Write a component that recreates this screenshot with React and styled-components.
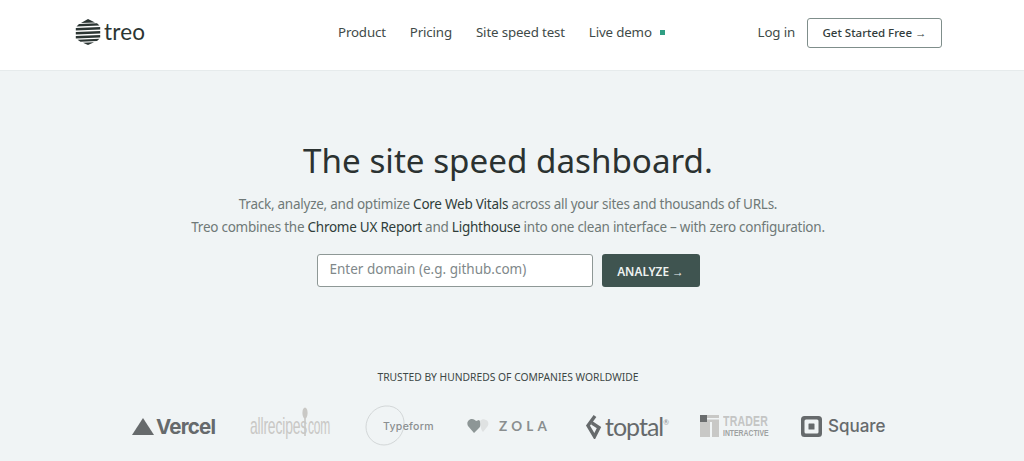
import styled, { createGlobalStyle } from 'styled-components';

const GlobalStyle = createGlobalStyle`
  html, body {
    margin: 0;
    padding: 0;
    height: 461px;
    overflow: hidden;
    background: #f0f4f5;
    font-family: "Noto Sans", "Open Sans", sans-serif;
  }
  * { box-sizing: border-box; }
`;

// 상단 헤더
const Header = styled.header`
  height: 71px;
  background: #fff;
  border-bottom: 1px solid #e6ebec;
  display: flex;
  align-items: center;
  padding: 0 82px 7px 75px;
`;

const Logo = styled.a`
  display: flex;
  align-items: center;
  gap: 3px;
  width: 263px;
  color: #2b3533;
  font-family: "Lato", sans-serif;
  font-size: 22.5px;
  line-height: 28px;
  letter-spacing: 0.2px;
`;

const Nav = styled.nav`
  display: flex;
  align-items: center;
  gap: 24px;
  flex: 1;
`;

const NavLink = styled.a`
  font-size: 13.3px;
  color: #3f4b49;
  letter-spacing: -0.15px;
`;

const LiveDot = styled.span`
  display: inline-block;
  width: 5px;
  height: 5px;
  margin-left: 8px;
  vertical-align: 2px;
  background: #2f9e83;
`;

const Right = styled.div`
  display: flex;
  align-items: center;
  gap: 12px;
`;

const StartButton = styled.a`
  width: 135px;
  height: 30px;
  margin-top: 2px;
  display: flex;
  align-items: center;
  justify-content: center;
  border: 1px solid #7f8e8b;
  border-radius: 3px;
  background: #fff;
  color: #333d3b;
  font-size: 11.5px;
  font-weight: 500;
`;

// 히어로 영역
const Hero = styled.section`
  width: 1016px;
  display: flex;
  flex-direction: column;
  align-items: center;
  padding-top: 67px;
`;

const Title = styled.h1`
  margin: 0;
  font-size: 33.2px;
  line-height: 46px;
  font-weight: 400;
  color: #2b3231;
`;

const Lead = styled.p`
  margin: 9px 0 0;
  text-align: center;
  font-size: 13.5px;
  line-height: 23px;
  color: #6f7977;
  letter-spacing: -0.25px;
`;

const Strong = styled.span`
  color: #2f3d3a;
`;

const SearchRow = styled.form`
  display: flex;
  gap: 9px;
  margin-top: 15px;
`;

const DomainInput = styled.div`
  width: 276px;
  height: 33px;
  padding: 0 12px 3px;
  display: flex;
  align-items: center;
  background: #fff;
  border: 1px solid #8e9896;
  border-radius: 3px;
  font-size: 13.5px;
  color: #80888a;
`;

const AnalyzeButton = styled.div`
  width: 98px;
  height: 33px;
  display: flex;
  align-items: center;
  justify-content: center;
  background: #3f5450;
  border-radius: 3px;
  color: #eef2f1;
  font-size: 11.8px;
  font-weight: 600;
`;

// 고객사 로고
const Trusted = styled.div`
  margin-top: 83px;
  font-size: 10.3px;
  line-height: 14px;
  color: #3d4745;
`;

const LogoRow = styled.div`
  width: 1016px;
  height: 46px;
  margin-top: 19px;
  padding: 0 0 0 132px;
  display: grid;
  grid-template-columns: 118px 115px 102px 118px 115px 101px auto;
  align-items: center;
`;

const Brand = styled.div`
  display: flex;
  align-items: center;
  gap: ${(p) => p.$gap || 0}px;
  height: 46px;
  position: relative;
`;

const VercelText = styled.span`
  font-family: "Inter", sans-serif;
  font-weight: 700;
  font-size: 20.5px;
  letter-spacing: -0.8px;
  color: #666a6c;
`;

const RecipesText = styled.span`
  font-family: "Liberation Sans", sans-serif;
  font-size: 24px;
  color: #c9c8c5;
  transform: scaleX(${(p) => p.$scale});
  transform-origin: left center;
  white-space: nowrap;
  letter-spacing: -0.3px;
  width: ${(p) => p.$width}px;
`;

const Spoon = styled.svg`
  margin-top: -8px;
  flex: none;
`;

const TypeformText = styled.span`
  font-family: "Inter", sans-serif;
  font-size: 10.5px;
  font-weight: 500;
  color: #8b8f90;
  position: absolute;
  left: 18px;
  letter-spacing: 0.3px;
`;

const ZolaText = styled.span`
  font-family: "Lato", sans-serif;
  font-size: 13.5px;
  font-weight: 700;
  letter-spacing: 4.2px;
  color: #8a8e8f;
`;

const ToptalText = styled.span`
  font-family: "Lato", sans-serif;
  font-size: 25px;
  color: #666a6c;
  letter-spacing: -1px;
`;

const Registered = styled.sup`
  font-size: 7px;
  line-height: 0;
  letter-spacing: 0;
  vertical-align: 11px;
  color: #8a8e8f;
`;

const TraderStack = styled.div`
  display: flex;
  flex-direction: column;
  margin-top: 1px;
  line-height: 11px;
  font-family: "Liberation Sans", sans-serif;
`;

const TraderTop = styled.span`
  font-size: 14px;
  font-weight: 700;
  color: #c4c5c4;
  transform: scaleX(0.75);
  transform-origin: left center;
  letter-spacing: 0.3px;
`;

const TraderBottom = styled.span`
  font-size: 9.5px;
  font-weight: 700;
  color: #9ea1a1;
  transform: scaleX(0.72);
  transform-origin: left center;
  white-space: nowrap;
`;

const SquareText = styled.span`
  font-family: "Inter", sans-serif;
  font-weight: 500;
  font-size: 17px;
  color: #666a6c;
`;

const TreoMark = () => (
  <svg width="26" height="26" viewBox="0 0 26 26" fill="#2b3533">
    <path d="M13 0 L20 3.4 L6 4 Z" />
    <path d="M4 5 L22 4.2 L24.5 6.6 L1.5 7.6 Z" />
    <path d="M0.8 9 L25.2 8 L25.2 10.6 L0.8 11.6 Z" />
    <path d="M0.8 13 L25.2 12 L25.2 14.6 L0.8 15.6 Z" />
    <path d="M0.8 17 L25.2 16 L25.2 18.4 L0.8 19.4 Z" />
    <path d="M2.5 20.8 L24.5 19.8 L22 22 L5.5 22.8 Z" />
    <path d="M8 23.8 L19 23.2 L13 26 Z" />
  </svg>
);

const App = () => (
  <>
    <GlobalStyle />
    <Header>
      <Logo>
        <TreoMark />
        treo
      </Logo>
      <Nav>
        <NavLink>Product</NavLink>
        <NavLink>Pricing</NavLink>
        <NavLink>Site speed test</NavLink>
        <NavLink>
          Live demo
          <LiveDot />
        </NavLink>
      </Nav>
      <Right>
        <NavLink>Log in</NavLink>
        <StartButton>Get Started Free →</StartButton>
      </Right>
    </Header>
    <Hero>
      <Title>The site speed dashboard.</Title>
      <Lead>
        Track, analyze, and optimize <Strong>Core Web Vitals</Strong> across all your sites and thousands of URLs.
        <br />
        Treo combines the <Strong>Chrome UX Report</Strong> and <Strong>Lighthouse</Strong> into one clean interface – with zero configuration.
      </Lead>
      <SearchRow>
        <DomainInput>Enter domain (e.g. github.com)</DomainInput>
        <AnalyzeButton>ANALYZE →</AnalyzeButton>
      </SearchRow>
      <Trusted>TRUSTED BY HUNDREDS OF COMPANIES WORLDWIDE</Trusted>
      <LogoRow>
        <Brand $gap={2}>
          <svg width="22" height="17" viewBox="0 0 22 17">
            <path d="M11 0 L22 17 L0 17 Z" fill="#666a6c" />
          </svg>
          <VercelText>Vercel</VercelText>
        </Brand>
        <Brand>
          <RecipesText $width={52} $scale={0.58}>allrecipes</RecipesText>
          <Spoon width="6" height="30" viewBox="0 0 6 30">
            <ellipse cx="3" cy="6" rx="2.6" ry="5.5" fill="#c9c8c5" />
            <rect x="2.2" y="10" width="1.6" height="19" fill="#c9c8c5" />
          </Spoon>
          <RecipesText $width={24} $scale={0.5}>com</RecipesText>
        </Brand>
        <Brand>
          <svg width="42" height="42" viewBox="0 0 42 42">
            <path d="M20 1 C32 0 40 9 39 20 C38 32 28 40 19 40 C9 40 1 32 1 22 C1 12 9 2 20 1 Z" fill="none" stroke="#d3d7d8" strokeWidth="1" />
          </svg>
          <TypeformText>Typeform</TypeformText>
        </Brand>
        <Brand $gap={6}>
          <svg width="26" height="14" viewBox="0 0 26 14">
            <path d="M7 14 L1 7 C-1 3 2 0 5 0 C7 0 8 1 9 2 L12 1 C14 3 14 7 12 9 Z" fill="#8d9696" />
            <path d="M13 2 C15 0 17 0 19 1 C22 2 22 6 20 8 L16 13 C13 10 14 5 13 2 Z" fill="#dfe2e2" />
          </svg>
          <ZolaText>ZOLA</ZolaText>
        </Brand>
        <Brand $gap={3}>
          <svg width="17" height="25" viewBox="0 0 17 25">
            <path d="M10 2 L3 11.5 L9.5 22.5 L14 13.5 L7 9" fill="none" stroke="#666a6c" strokeWidth="3.4" />
          </svg>
          <ToptalText>
            toptal<Registered>®</Registered>
          </ToptalText>
        </Brand>
        <Brand $gap={4}>
          <svg width="19" height="22" viewBox="0 0 19 22">
            <rect x="0" y="0" width="19" height="22" fill="#c8c8c6" />
            <rect x="0" y="0" width="7" height="7" fill="#6a6d6e" />
            <rect x="7" y="3" width="12" height="1.5" fill="#f0f4f5" />
            <rect x="10" y="7" width="2" height="15" fill="#f0f4f5" />
          </svg>
          <TraderStack>
            <TraderTop>TRADER</TraderTop>
            <TraderBottom>INTERACTIVE</TraderBottom>
          </TraderStack>
        </Brand>
        <Brand $gap={6}>
          <svg width="21" height="21" viewBox="0 0 21 21">
            <path fillRule="evenodd" d="M3.5 0 H17.5 A3.5 3.5 0 0 1 21 3.5 V17.5 A3.5 3.5 0 0 1 17.5 21 H3.5 A3.5 3.5 0 0 1 0 17.5 V3.5 A3.5 3.5 0 0 1 3.5 0 Z M5 3.5 A1.5 1.5 0 0 0 3.5 5 V16 A1.5 1.5 0 0 0 5 17.5 H16 A1.5 1.5 0 0 0 17.5 16 V5 A1.5 1.5 0 0 0 16 3.5 Z" fill="#666a6c" />
            <rect x="7.5" y="7.5" width="6" height="6" rx="0.6" fill="#666a6c" />
          </svg>
          <SquareText>Square</SquareText>
        </Brand>
      </LogoRow>
    </Hero>
  </>
);

export default App;
